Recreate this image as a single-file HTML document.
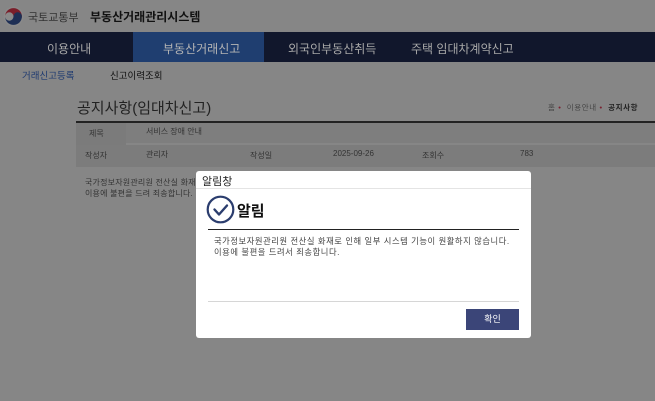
<!DOCTYPE html>
<html><head><meta charset="utf-8"><style>
*{margin:0;padding:0;box-sizing:border-box}
body{width:655px;height:401px;overflow:hidden;position:relative;background:#868686;font-family:"Liberation Sans","Noto Sans CJK KR",sans-serif;color:#222}
.a{position:absolute;white-space:nowrap}
</style></head><body>
<svg class="a" style="left:3px;top:6px" width="21" height="21" viewBox="0 0 20 20"><circle cx="10" cy="10" r="9.5" fill="#8a8a8a"/><path d="M2 10a8 8 0 0 1 16 0a4 4 0 0 1-8 0a4 4 0 0 0-8 0z" fill="#7a1e2a"/><path d="M2 10a4 4 0 0 0 8 0a4 4 0 0 1 8 0a8 8 0 0 1-16 0z" fill="#1e2f55"/></svg>
<div class="a" style="left:28px;top:9px;font-size:11px;color:#333">국토교통부</div>
<div class="a" style="left:90px;top:8px;font-size:12px;font-weight:bold;color:#111">부동산거래관리시스템</div>
<div class="a" style="left:0;top:32px;width:655px;height:30px;background:#11172c"></div>
<div class="a" style="left:133px;top:32px;width:131px;height:30px;background:#1f3e70"></div>
<div class="a" style="left:47px;top:40px;font-size:12px;color:#a8a8a8">이용안내</div>
<div class="a" style="left:163px;top:40px;font-size:12px;color:#b5b5b5">부동산거래신고</div>
<div class="a" style="left:288px;top:40px;font-size:12px;color:#a8a8a8">외국인부동산취득</div>
<div class="a" style="left:411px;top:40px;font-size:12px;color:#a8a8a8">주택 임대차계약신고</div>
<div class="a" style="left:22px;top:68px;font-size:9.5px;color:#1e3a70">거래신고등록</div>
<div class="a" style="left:110px;top:68px;font-size:9.5px;color:#111">신고이력조회</div>
<div class="a" style="left:77px;top:97px;font-size:15px;color:#222">공지사항(임대차신고)</div>
<div class="a" style="left:548px;top:102px;font-size:7.5px;color:#444;letter-spacing:0.6px">홈 <span style="color:#7a2030">•</span> &nbsp;이용안내 <span style="color:#7a2030">•</span> &nbsp;<b style="color:#222">공지사항</b></div>
<div class="a" style="left:76px;top:121px;width:579px;height:2px;background:#222"></div>
<div class="a" style="left:76px;top:123px;width:579px;height:20px;background:#7e7e7e"></div>
<div class="a" style="left:76px;top:123px;width:50px;height:44px;background:#7b7b7b"></div>
<div class="a" style="left:76px;top:145px;width:579px;height:22px;background:#7c7c7c"></div>
<div class="a" style="left:89px;top:128px;font-size:8px;color:#333">제목</div>
<div class="a" style="left:146px;top:126px;font-size:8px;color:#333">서비스 장애 안내</div>
<div class="a" style="left:85px;top:150px;font-size:8px;color:#333">작성자</div>
<div class="a" style="left:146px;top:149px;font-size:8px;color:#333">관리자</div>
<div class="a" style="left:250px;top:150px;font-size:8px;color:#333">작성일</div>
<div class="a" style="left:333px;top:149px;font-size:8px;color:#333">2025-09-26</div>
<div class="a" style="left:422px;top:150px;font-size:8px;color:#333">조회수</div>
<div class="a" style="left:520px;top:149px;font-size:8px;color:#333">783</div>
<div class="a" style="left:85px;top:177px;font-size:8px;color:#333;line-height:11px;letter-spacing:0.2px">국가정보자원관리원 전산실 화재로<br>이용에 불편을 드려 죄송합니다.</div>
<div class="a" style="left:196px;top:171px;width:335px;height:167px;background:#fff;border-radius:3px"></div>
<div class="a" style="left:202px;top:173px;font-size:11px;color:#222">알림창</div>
<div class="a" style="left:196px;top:188px;width:335px;height:1px;background:#e4e4e4"></div>
<svg class="a" style="left:206px;top:195px" width="29" height="29" viewBox="0 0 29 29"><circle cx="14.5" cy="14.5" r="12.8" fill="none" stroke="#2b3d6e" stroke-width="2.2"/><path d="M8.5 14.5l4.5 5l8-9" fill="none" stroke="#2b3d6e" stroke-width="2.4" stroke-linecap="round" stroke-linejoin="round"/></svg>
<div class="a" style="left:237px;top:200px;font-size:15px;font-weight:bold;color:#111">알림</div>
<div class="a" style="left:208px;top:229px;width:311px;height:1px;background:#222"></div>
<div class="a" style="left:214px;top:236px;font-size:8.3px;color:#444;line-height:11px;letter-spacing:0.55px">국가정보자원관리원 전산실 화재로 인해 일부 시스템 기능이 원활하지 않습니다.<br>이용에 불편을 드려서 죄송합니다.</div>
<div class="a" style="left:208px;top:301px;width:311px;height:1px;background:#d6d6d6"></div>
<div class="a" style="left:466px;top:309px;width:53px;height:21px;background:#3b4578;color:#fff;font-size:9px;text-align:center;line-height:21px">확인</div>
</body></html>
